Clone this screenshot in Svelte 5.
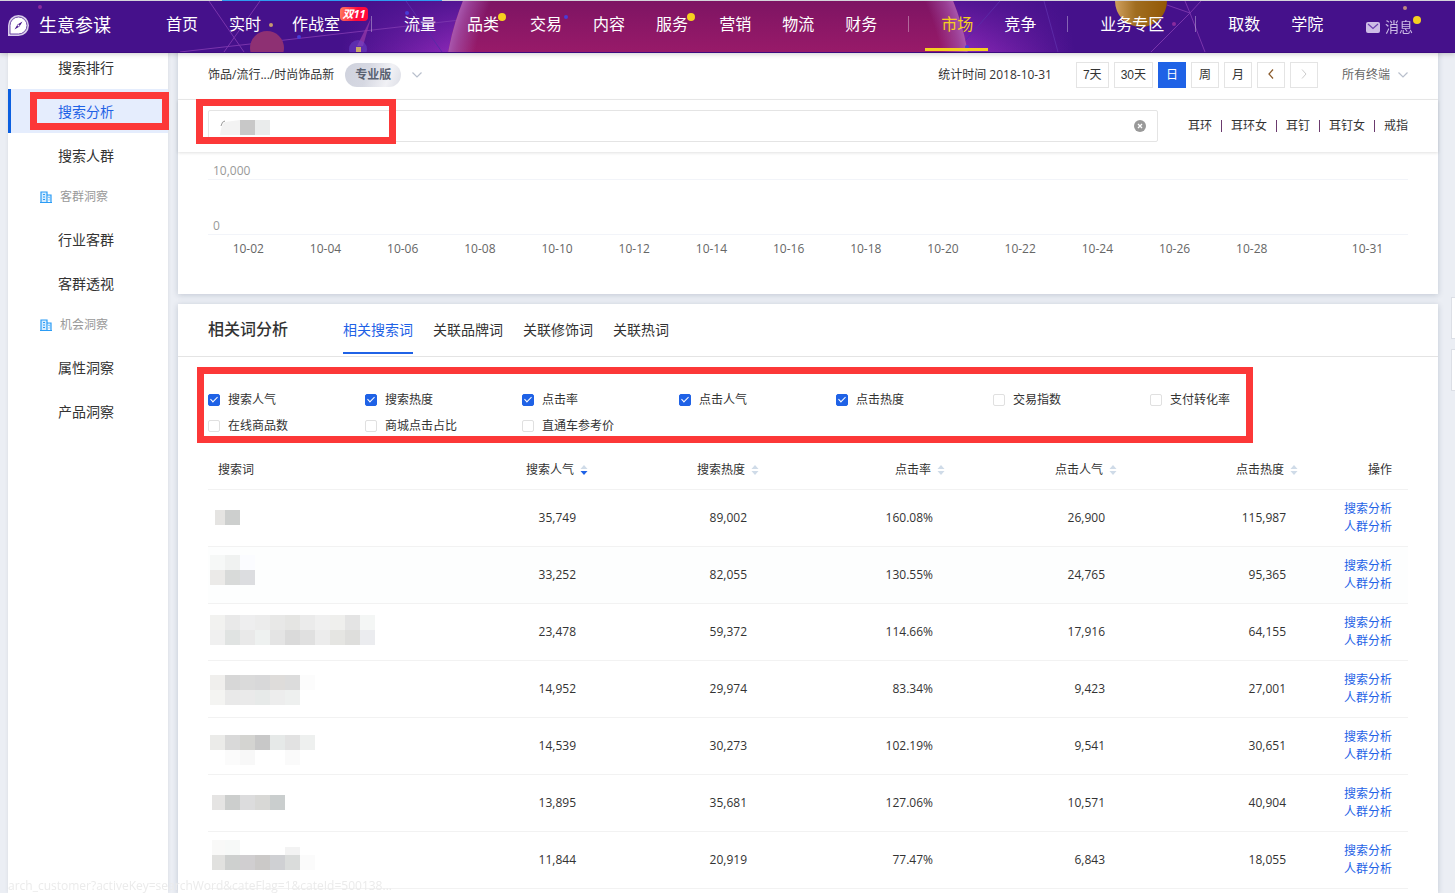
<script>
    const navGroups = [
        [{ name: '首页' }, { name: '实时' }, { name: '作战室', tag: '双11' }],
        [
            { name: '流量' },
            { name: '品类', dot: true },
            { name: '交易' },
            { name: '内容' },
            { name: '服务', dot: true },
            { name: '营销' },
            { name: '物流' },
            { name: '财务' },
        ],
        [{ name: '市场' }, { name: '竞争' }],
        [{ name: '业务专区' }],
        [{ name: '取数' }, { name: '学院' }],
    ];
    const activeNav = '市场';

    const menu = [
        { name: '搜索排行' },
        { name: '搜索分析' },
        { name: '搜索人群' },
        { name: '客群洞察', group: true },
        { name: '行业客群' },
        { name: '客群透视' },
        { name: '机会洞察', group: true },
        { name: '属性洞察' },
        { name: '产品洞察' },
    ];
    const activeMenu = '搜索分析';

    const periods = ['7天', '30天', '日', '周', '月'];
    let period = $state('日');

    const quickWords = ['耳环', '耳环女', '耳钉', '耳钉女', '戒指'];

    // one slot per day, 10-02 to 10-31, every second one is labelled
    const days = Array.from({ length: 30 }, (_, i) => {
        const day = i + 2;
        const shown = day == 31 || (day % 2 == 0 && day < 30);
        return shown ? `10-${String(day).padStart(2, '0')}` : '';
    });

    const tabs = ['相关搜索词', '关联品牌词', '关联修饰词', '关联热词'];
    let tab = $state('相关搜索词');

    let metrics = $state([
        { name: '搜索人气', checked: true },
        { name: '搜索热度', checked: true },
        { name: '点击率', checked: true },
        { name: '点击人气', checked: true },
        { name: '点击热度', checked: true },
        { name: '交易指数', checked: false },
        { name: '支付转化率', checked: false },
        { name: '在线商品数', checked: false },
        { name: '商城点击占比', checked: false },
        { name: '直通车参考价', checked: false },
    ]);

    const columns = ['搜索人气', '搜索热度', '点击率', '点击人气', '点击热度'];

    // mask: [x, y, colours of the 15px tiles]
    const rows = [
        {
            values: ['35,749', '89,002', '160.08%', '26,900', '115,987'],
            mask: [[7, 20, ['#e5e4e2']], [17, 20, ['#cdcfce']]],
        },
        {
            values: ['33,252', '82,055', '130.55%', '24,765', '95,365'],
            mask: [[2, 8, ['#f6f8f7', '#f0f2f1', '#fbfcff']], [2, 23, ['#ebeae8', '#d8dad9', '#dcdde0']]],
        },
        {
            values: ['23,478', '59,372', '114.66%', '17,916', '64,155'],
            mask: [
                [2, 11, ['#f2f2f0', '#e9e9e9', '#eeeeef', '#ececec', '#e8e8e7', '#e5e5e3', '#ebebeb', '#f0f0f0', '#efefed', '#e4e4e4', '#f4f6f5']],
                [2, 26, ['#f0f0f0', '#e0e3e2', '#e9e9e9', '#eef1f0', '#e4e4e4', '#dadada', '#e0e0e0', '#ececec', '#e5e5e2', '#dededc', '#ebecef']],
            ],
        },
        {
            values: ['14,952', '29,974', '83.34%', '9,423', '27,001'],
            mask: [
                [2, 14, ['#f0efed', '#d7d7d7', '#dadada', '#d8d8d9', '#dedcda', '#dcdcdc', '#fcfcfc']],
                [2, 29, ['#f4f4f2', '#e9e9e9', '#eaeaea', '#e7eae9', '#ededed', '#eef0ef']],
            ],
        },
        {
            values: ['14,539', '30,273', '102.19%', '9,541', '30,651'],
            mask: [
                [2, 17, ['#ebebe9', '#d9d9d9', '#d4d4d1', '#c8c8c8', '#e6e9e8', '#e2e2e2', '#eef0ef']],
                [17, 32, ['#fbfbfb', '#f8f8f8']],
                [77, 32, ['#fafafa']],
            ],
        },
        {
            values: ['13,895', '35,681', '127.06%', '10,571', '40,904'],
            mask: [[4, 20, ['#e5e4e3']], [17, 20, ['#cccecd', '#dcdcdd', '#d8d8d6', '#cacece']]],
        },
        {
            values: ['11,844', '20,919', '77.47%', '6,843', '18,055'],
            mask: [
                [4, 8, ['#f9f9f8']],
                [17, 8, ['#f7f9f8']],
                [77, 15, ['#f3f3f3']],
                [4, 23, ['#e1e1df']],
                [17, 23, ['#ced0cf', '#d0ced0', '#cbc9c8', '#cfd0d3', '#dadcdb', '#fbfbfb']],
            ],
        },
    ];
</script>

<header class="topbar">
    <svg class="sky" width="1455" height="52" viewBox="0 0 1455 52" aria-hidden="true">
        <defs>
            <linearGradient id="dusk" x1="0" y1="0" x2="0" y2="1">
                <stop offset="0" stop-color="#7d1463" />
                <stop offset="1" stop-color="#981a69" />
            </linearGradient>
            <radialGradient id="rim" cx="708" cy="99" r="264" gradientUnits="userSpaceOnUse">
                <stop offset=".9" stop-color="#a350a8" stop-opacity="0" />
                <stop offset=".97" stop-color="#a350a8" stop-opacity=".7" />
                <stop offset="1" stop-color="#a857ae" />
            </radialGradient>
            <radialGradient id="glow" cx="708" cy="99" r="370" gradientUnits="userSpaceOnUse">
                <stop offset=".7" stop-color="#8a27b5" />
                <stop offset="1" stop-color="#8a27b5" stop-opacity="0" />
            </radialGradient>
            <linearGradient id="shade" x1="0" y1="0" x2="0" y2="1">
                <stop offset="0" stop-color="#45118b" stop-opacity=".8" />
                <stop offset="1" stop-color="#45118b" stop-opacity="0" />
            </linearGradient>
            <linearGradient id="moon">
                <stop offset="0" stop-color="#d0a05e" />
                <stop offset=".4" stop-color="#a06d20" />
                <stop offset="1" stop-color="#925805" />
            </linearGradient>
        </defs>
        <rect width="1455" height="52" fill="#45118b" />
        <circle cx="708" cy="99" r="370" fill="url(#glow)" />
        <rect x="330" width="750" height="52" fill="url(#shade)" />
        <g stroke="#7a35ac" stroke-width="1" fill="none">
            <path d="M209 1l35 51M260 1l-36 51M180 52l280-32" />
            <path d="M1190 13l-39 39M1190 13l15 39M1190 13l-5-12M1190 13l11-12M1190 13l-23-8" />
            <path d="M406 1l36 51M1000 1l-35 40M1044 1l14 51" stroke="#5b2aa6" />
        </g>
        <clipPath id="disc"><circle cx="708" cy="99" r="264" /></clipPath>
        <rect x="440" width="540" height="52" fill="url(#dusk)" clip-path="url(#disc)" />
        <circle cx="708" cy="99" r="264" fill="url(#rim)" />
        <path d="M371 18l-8 28h-6z" fill="#9a3aa8" opacity=".7" />
        <circle cx="267" cy="48" r="17" fill="#8e3073" />
        <circle cx="358" cy="49" r="9" fill="#6e45cc" opacity=".5" />
        <rect x="356" y="47" width="5" height="5" fill="#c9a86a" />
        <circle cx="1141" cy="1" r="26" fill="url(#moon)" />
        <circle cx="40" cy="7" r="2" fill="#8a2b9e" />
        <circle cx="271" cy="25" r="2" fill="#c69a70" />
        <circle cx="299" cy="37" r="2" fill="#4a3cd6" />
        <circle cx="407" cy="13" r="2" fill="#4a3cd6" />
        <circle cx="566" cy="17" r="2" fill="#4a3cd6" />
        <circle cx="967" cy="47" r="2" fill="#4a3cd6" />
        <circle cx="1174" cy="24" r="2" fill="#8a2b9e" />
        <circle cx="1405" cy="8" r="2" fill="#c08a80" />
        <rect width="1455" height="1" fill="#d4d4da" />
        <rect x="222" width="220" height="1" fill="#2f9df0" />
    </svg>

    <a class="brand" href="#home">
        <svg width="21" height="21" viewBox="0 0 21 21" aria-hidden="true">
            <path d="M0 21V10.500A10.500 10.500 0 1 1 10.500 21z" fill="#d9cdeb" />
            <path d="M2 19v-8.500A8.500 8.500 0 1 1 10.500 19z" fill="#fff" stroke="#6f4aa8" stroke-width="1" />
            <path d="M14.500 6.500l-3 5-5 3 3-5z" fill="#45118b" />
            <circle cx="10.500" cy="10.500" r="1" fill="#fff" />
        </svg>
        <span>生意参谋</span>
    </a>

    <nav class="nav">
        {#each navGroups as group, i}
            {#if i > 0}
                <i class="divider"></i>
            {/if}
            {#each group as item}
                <a class="navItem" class:active={item.name == activeNav} href="#{item.name}">
                    {item.name}
                    {#if item.tag}<em class="tag">{item.tag}</em>{/if}
                    {#if item.dot}<i class="dot"></i>{/if}
                </a>
            {/each}
        {/each}
    </nav>

    <a class="message" href="#message">
        <svg width="14" height="11" viewBox="0 0 14 11" aria-hidden="true">
            <rect width="14" height="11" rx="2" fill="#cdbde6" />
            <path d="M2 2l5 4.500L12 2" fill="none" stroke="#6d3fb0" stroke-width="1.200" />
        </svg>
        消息
        <i class="dot"></i>
    </a>
</header>

<div class="page">
    <aside class="sidebar">
        {#each menu as item}
            {#if item.group}
                <div class="menuGroup">
                    <svg width="12" height="12" viewBox="0 0 12 12" aria-hidden="true">
                        <path d="M1 11V1h6v10M7 4h4v7M0 11.500h12" fill="#d5ecff" stroke="#2b9cf5" stroke-width="1.200" />
                        <path d="M3 3.500h2M3 6h2M3 8.500h2M9 6v1M9 8.500v1" stroke="#2b9cf5" />
                    </svg>
                    {item.name}
                </div>
            {:else}
                <a class="menuItem" class:active={item.name == activeMenu} href="#{item.name}">{item.name}</a>
            {/if}
        {/each}
    </aside>

    <main class="main">
        <section class="card trend">
            <div class="toolbar">
                <span>饰品/流行.../时尚饰品新</span>
                <span class="edition">专业版</span>
                <svg class="chevron" width="10" height="6" viewBox="0 0 10 6" aria-hidden="true"><path d="M.5.5L5 5 9.500.5" /></svg>
                <span class="date">统计时间 2018-10-31</span>
                <div class="periods">
                    {#each periods as p}
                        <button class:on={p == period} onclick={() => (period = p)}>{p}</button>
                    {/each}
                    <button aria-label="前一天">
                        <svg width="6" height="10" viewBox="0 0 6 10"><path d="M5 .5L1 5l4 4.500" stroke="#8a5a2a" stroke-width="1.300" /></svg>
                    </button>
                    <button aria-label="后一天" disabled>
                        <svg width="6" height="10" viewBox="0 0 6 10"><path d="M1 .5L5 5 1 9.500" stroke="#ccc" /></svg>
                    </button>
                </div>
                <button class="terminal">
                    所有终端
                    <svg class="chevron" width="10" height="6" viewBox="0 0 10 6" aria-hidden="true"><path d="M.5.5L5 5 9.500.5" /></svg>
                </button>
            </div>

            <div class="searchRow">
                <div class="searchBox">
                    <input type="text" aria-label="搜索词" />
                    <svg class="smudge" width="60" height="15" viewBox="0 0 60 15" aria-hidden="true">
                        <path d="M1 6Q2 1 5 1" fill="none" stroke="#999" />
                        <path d="M0 15Q1 5 5 2l15-2v15z" fill="#f3f3f3" />
                        <path d="M20 0h15v15H20z" fill="#c8c8c8" />
                        <path d="M35 0h15v15H35z" fill="#eaecec" />
                    </svg>
                    <button class="clear" aria-label="清空">
                        <svg width="12" height="12" viewBox="0 0 12 12">
                            <circle cx="6" cy="6" r="6" fill="#999" />
                            <path d="M4 4l4 4M8 4L4 8" stroke="#fff" stroke-width="1.300" />
                        </svg>
                    </button>
                </div>
                <div class="quick">
                    {#each quickWords as word}
                        <a href="#{word}">{word}</a>
                    {/each}
                </div>
            </div>

            <div class="chart">
                <div class="gridLine">10,000</div>
                <div class="gridLine">0</div>
                <div class="days">
                    {#each days as day}
                        <span>{day}</span>
                    {/each}
                </div>
            </div>
        </section>

        <section class="card related">
            <div class="cardHead">
                <h2>相关词分析</h2>
                <div class="tabs">
                    {#each tabs as t}
                        <button class:on={t == tab} onclick={() => (tab = t)}>{t}</button>
                    {/each}
                </div>
            </div>

            <div class="metrics">
                {#each metrics as metric}
                    <label>
                        <input type="checkbox" bind:checked={metric.checked} />
                        {metric.name}
                    </label>
                {/each}
            </div>

            <table>
                <colgroup>
                    <col />
                    <col class="c1" />
                    <col class="c2" />
                    <col class="c3" />
                    <col class="c4" />
                    <col class="c5" />
                    <col class="c6" />
                </colgroup>
                <thead>
                    <tr>
                        <th class="word">搜索词</th>
                        {#each columns as column, i}
                            <th>
                                {column}
                                <svg class="sort" width="8" height="10" viewBox="0 0 8 10" aria-hidden="true">
                                    <path d="M.5 4L4 0l3.500 4z" fill="#cfdbe8" />
                                    <path d="M.5 6L4 10l3.500-4z" fill={i == 0 ? '#1f62e6' : '#cfdbe8'} />
                                </svg>
                            </th>
                        {/each}
                        <th class="ops">操作</th>
                    </tr>
                </thead>
                <tbody>
                    {#each rows as row}
                        <tr>
                            <td class="word">
                                <svg width="180" height="56" viewBox="0 0 180 56" aria-hidden="true">
                                    {#each row.mask as [x, y, tiles]}
                                        {#each tiles as fill, i}
                                            <rect x={x + i * 15} {y} width="15" height="15" {fill} />
                                        {/each}
                                    {/each}
                                </svg>
                            </td>
                            {#each row.values as value}
                                <td>{value}</td>
                            {/each}
                            <td class="ops">
                                <a href="#search">搜索分析</a>
                                <a href="#crowd">人群分析</a>
                            </td>
                        </tr>
                    {/each}
                </tbody>
            </table>
        </section>
    </main>
</div>

<div class="floats">
    <button aria-label="反馈"></button>
    <button aria-label="帮助"></button>
</div>

<div class="status">arch_customer?activeKey=searchWord&cateFlag=1&cateId=500138...</div>

<style>
    :global(body) {
        background: #ebeef4;
        color: #333;
        font: 12px/18px "Open Sans", "Noto Sans CJK SC", sans-serif;
    }

    a {
        color: inherit;
        text-decoration: none;
    }

    button {
        padding: 0;
        border: 0;
        background: none;
        color: inherit;
        font: inherit;
        cursor: pointer;
    }

    .topbar {
        position: fixed;
        z-index: 10;
        top: 0;
        left: 0;
        right: 0;
        display: flex;
        align-items: flex-start;
        box-sizing: border-box;
        height: 53px;
        padding: 0 42px 0 8px;
        border-bottom: 1px solid #3d0c80;
        background: #45118b;
        color: #fff;
        box-shadow: 0 1px 5px rgba(0, 0, 0, 0.2);
        line-height: 48px;
        white-space: nowrap;
    }

    .sky {
        position: absolute;
        top: 0;
        left: 0;
    }

    .brand {
        position: relative;
        display: flex;
        align-items: center;
        gap: 10px;
        width: 158px;
        font-size: 18px;
        line-height: 50px;
    }

    .nav {
        position: relative;
        display: flex;
        align-items: center;
        gap: 31px;
        font-size: 16px;
    }

    .navItem {
        position: relative;
    }

    .navItem.active {
        color: #f5d020;
    }

    .navItem.active::after {
        content: "";
        position: absolute;
        left: -16px;
        right: -15px;
        bottom: -3px;
        height: 3px;
        background: #f5d020;
    }

    .divider {
        box-sizing: border-box;
        width: 2px;
        height: 16px;
        border-left: 1px solid rgba(255, 255, 255, 0.35);
    }

    .dot {
        position: absolute;
        top: 13px;
        left: 100%;
        width: 8px;
        height: 8px;
        margin-left: -1px;
        border-radius: 50%;
        background: #f5d020;
    }

    .tag {
        position: absolute;
        top: 7px;
        left: 100%;
        width: 28px;
        border-radius: 4px;
        background: linear-gradient(100deg, #ff7a5c, #ff0a3c 60%);
        font-size: 11px;
        font-weight: bold;
        line-height: 14px;
        text-align: center;
    }

    .message {
        position: relative;
        display: flex;
        align-items: center;
        gap: 5px;
        margin-left: auto;
        color: #cdbde6;
        font-size: 14px;
        line-height: 54px;
    }

    .message .dot {
        top: 16px;
        margin-left: 0;
    }

    .page {
        display: flex;
        gap: 10px;
        box-sizing: border-box;
        min-height: 100vh;
        padding: 45px 17px 0 8px;
    }

    .sidebar {
        flex: none;
        width: 160px;
        background: #fff;
        box-shadow: 0 0 4px rgba(0, 0, 0, 0.08);
        font-size: 14px;
    }

    .menuItem {
        position: relative;
        display: block;
        height: 44px;
        padding-left: 50px;
        line-height: 46px;
    }

    .menuItem.active {
        background: #e5edfd;
        color: #1f62e6;
        box-shadow: inset 3px 0 #0b5fe0;
    }

    .menuItem.active::after {
        content: "";
        position: absolute;
        top: 3px;
        left: 22px;
        right: -1px;
        bottom: 3px;
        border: 7px solid #fc3838;
    }

    .menuGroup {
        display: flex;
        align-items: center;
        gap: 8px;
        height: 40px;
        padding-left: 32px;
        color: #999;
        font-size: 12px;
    }

    .main {
        display: flex;
        flex: 1;
        flex-direction: column;
        gap: 10px;
        min-width: 0;
    }

    .card {
        background: #fff;
        box-shadow: 0 1px 6px rgba(30, 50, 80, 0.2);
    }

    .toolbar {
        display: flex;
        align-items: center;
        height: 38px;
        padding: 11px 30px 5px;
        border-bottom: 1px solid #ebebeb;
        white-space: nowrap;
    }

    .edition {
        margin: 0 11px;
        padding: 0 10px;
        border-radius: 12px;
        background: linear-gradient(110deg, #cfd2dd, #d6d8e2 40%, #f1f1f5 75%, #dcdee6);
        color: #5a6272;
        font-weight: bold;
        line-height: 24px;
    }

    .chevron {
        fill: none;
        stroke: #b8bfcc;
        stroke-width: 1.2;
    }

    .date {
        margin-left: auto;
    }

    .periods {
        display: flex;
        gap: 5px;
        margin: 0 24px;
    }

    .periods button {
        box-sizing: border-box;
        min-width: 28px;
        height: 26px;
        padding: 0 6px;
        border: 1px solid #e4e4e4;
        font-family: "Liberation Sans", "Noto Sans CJK SC", sans-serif;
    }

    .periods button.on {
        border-color: #1f62e6;
        background: #1f62e6;
        color: #fff;
    }

    .periods svg {
        fill: none;
    }

    .terminal {
        display: flex;
        align-items: center;
        gap: 8px;
        color: #666;
    }

    .searchRow {
        position: relative;
        display: flex;
        align-items: center;
        gap: 30px;
        height: 52px;
        padding: 0 30px;
        box-shadow: 0 1px 3px rgba(0, 0, 0, 0.12);
    }

    .searchRow::after {
        content: "";
        position: absolute;
        top: -1px;
        left: 18px;
        width: 186px;
        height: 31px;
        border: 7px solid #fc3838;
        pointer-events: none;
    }

    .searchBox {
        position: relative;
        display: flex;
        flex: 1;
    }

    .searchBox input {
        box-sizing: border-box;
        width: 100%;
        height: 32px;
        padding: 0 40px 0 12px;
        border: 1px solid #e4e4e4;
        border-radius: 2px;
        font: inherit;
        outline: 0;
    }

    .smudge {
        position: absolute;
        top: 10px;
        left: 12px;
    }

    .clear {
        position: absolute;
        top: 10px;
        right: 12px;
        height: 12px;
    }

    .clear svg {
        display: block;
    }

    .quick {
        display: flex;
        gap: 9px;
        line-height: 12px;
        white-space: nowrap;
    }

    .quick a + a {
        padding-left: 9px;
        border-left: 1px solid #6b3a6e;
    }

    .chart {
        height: 132px;
        padding: 10px 30px 0;
        color: #666;
    }

    .gridLine {
        height: 17px;
        padding: 0 5px;
        border-bottom: 1px solid #f2f4f9;
        color: #999;
    }

    .gridLine + .gridLine {
        margin-top: 37px;
    }

    .days {
        display: flex;
        padding: 5px 21px 0;
    }

    .days span {
        display: flex;
        flex: 1 0 0;
        justify-content: center;
        width: 0;
        white-space: nowrap;
    }

    .related {
        flex: 1;
    }

    .cardHead {
        display: flex;
        gap: 55px;
        height: 52px;
        padding: 0 30px;
        border-bottom: 1px solid #e4e4e4;
    }

    h2 {
        margin: 0;
        font-size: 16px;
        font-weight: 500;
        line-height: 50px;
    }

    .tabs {
        display: flex;
        gap: 20px;
        height: 50px;
    }

    .tabs button {
        padding-top: 4px;
        border-bottom: 2px solid transparent;
        font-size: 14px;
    }

    .tabs button.on {
        border-color: #1f62e6;
        color: #1f62e6;
    }

    .metrics {
        position: relative;
        display: grid;
        grid-template-columns: repeat(auto-fill, 157px);
        margin: 30px 30px 11px;
        line-height: 26px;
    }

    .metrics::after {
        content: "";
        position: absolute;
        top: -20px;
        left: -11px;
        width: 1042px;
        bottom: -4px;
        border: 7px solid #fc3838;
        pointer-events: none;
    }

    .metrics label {
        display: flex;
        align-items: center;
        gap: 8px;
    }

    .metrics input {
        appearance: none;
        position: relative;
        box-sizing: border-box;
        width: 12px;
        height: 12px;
        margin: 0;
        border: 1px solid #e0e0e0;
        border-radius: 2px;
    }

    .metrics input:checked {
        border-color: #1f62e6;
        background: #1f62e6;
    }

    .metrics input:checked::after {
        content: "";
        position: absolute;
        top: 0;
        left: 3px;
        width: 3px;
        height: 6px;
        border: solid #fff;
        border-width: 0 1px 1px 0;
        transform: rotate(45deg);
    }

    table {
        width: calc(100% - 60px);
        margin: 0 30px;
        border-collapse: separate;
        border-spacing: 0;
        table-layout: fixed;
    }

    .c1 {
        width: 172px;
    }

    .c2 {
        width: 171px;
    }

    .c3 {
        width: 186px;
    }

    .c4 {
        width: 172px;
    }

    .c5 {
        width: 181px;
    }

    .c6 {
        width: 100px;
    }

    th {
        height: 39px;
        padding: 0 10px 0 0;
        border-bottom: 1px solid #f2f2f2;
        font-weight: normal;
        text-align: right;
    }

    th.word {
        padding-left: 10px;
        text-align: left;
    }

    .sort {
        margin-left: 3px;
        vertical-align: -1px;
    }

    td {
        height: 56px;
        padding: 0 22px 0 0;
        border-bottom: 1px solid #f2f2f2;
        text-align: right;
    }

    td.word {
        padding: 0;
    }

    td.word svg {
        display: block;
    }

    tbody tr:nth-child(2) {
        background: #fdfefe;
    }

    th.ops,
    td.ops {
        padding-right: 16px;
    }

    .ops a {
        display: block;
        color: #1f62e6;
    }

    .floats {
        position: fixed;
        top: 297px;
        right: -38px;
        display: flex;
        flex-direction: column;
        gap: 10px;
    }

    .floats button {
        box-sizing: border-box;
        width: 42px;
        height: 42px;
        border: 1px solid #dcdfe6;
        background: #fff;
    }

    .status {
        position: fixed;
        left: 8px;
        bottom: 0;
        color: #ebebeb;
        line-height: 14px;
        white-space: nowrap;
    }
</style>
